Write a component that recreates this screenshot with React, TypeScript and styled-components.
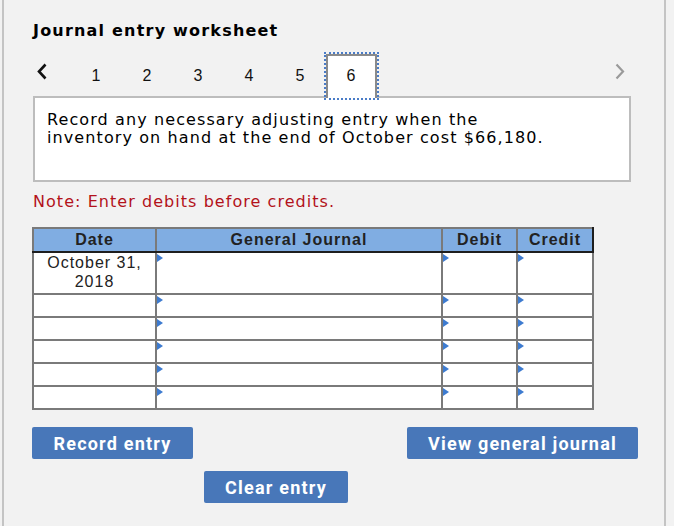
import React from 'react'
import styled, { createGlobalStyle } from 'styled-components'

const GlobalStyle = createGlobalStyle`
  html, body {
    margin: 0;
    padding: 0;
    background: #f2f2f2;
  }
`

const Frame = styled.div`
  box-sizing: border-box;
  width: 664px;
  height: 526px;
  margin-left: 2px;
  border-left: 2px solid #c4c4c4;
  border-right: 2px solid #c4c4c4;
  padding: 21px 0 0 28px;
  background: #f2f2f2;
`

const Title = styled.h2`
  margin: 0 0 0 1px;
  font-family: 'DejaVu Sans', Verdana, sans-serif;
  font-weight: bold;
  font-size: 16px;
  line-height: 20px;
  letter-spacing: 1.2px;
  color: #000;
`

const TabBar = styled.div`
  display: flex;
  align-items: flex-end;
  width: 600px;
  height: 42px;
  margin-top: 13px;
`

const Arrow = styled.button<{ $muted?: boolean }>`
  display: flex;
  align-items: flex-start;
  height: 42px;
  padding: 9px 0 0;
  border: 0;
  background: none;
  color: ${(p) => (p.$muted ? '#9a9a9a' : '#111')};
`

const PrevArrow = styled(Arrow)`
  width: 39px;
  padding-left: 5px;
`

const NextArrow = styled(Arrow)`
  margin-left: auto;
  padding-right: 7px;
`

const Tab = styled.div<{ $active?: boolean }>`
  box-sizing: border-box;
  width: 51px;
  height: 42px;
  display: flex;
  justify-content: center;
  padding-top: 13px;
  font-family: 'Liberation Sans', Arial, sans-serif;
  font-size: 16px;
  line-height: 18px;
  letter-spacing: 1px;
  color: #111;
  ${(p) =>
    p.$active &&
    `
    position: relative;
    z-index: 1;
    margin-bottom: -2px;
    height: 44px;
    background: #fff;
    border: 2px solid #8a8a8a;
    border-bottom: 0;
    outline: 2px dotted #4a7cc7;
    outline-offset: 0px;
    padding-top: 11px;
  `}
`

const Prompt = styled.div`
  box-sizing: border-box;
  width: 598px;
  height: 86px;
  margin-left: 1px;
  padding: 13px 12px 0;
  background: #fff;
  border: 2px solid #bdbdbd;
  font-family: 'DejaVu Sans', Verdana, sans-serif;
  font-size: 16px;
  line-height: 18px;
  letter-spacing: 1.1px;
  color: #000;
`

const Note = styled.p`
  margin: 10px 0 0 1px;
  font-family: 'DejaVu Sans', Verdana, sans-serif;
  font-size: 16px;
  line-height: 20px;
  letter-spacing: 1.05px;
  color: #b3121b;
`

const Grid = styled.table`
  margin-top: 15px;
  border-collapse: collapse;
  table-layout: fixed;
  width: 560px;
  font-family: 'Liberation Sans', Arial, sans-serif;
  font-size: 16px;
  letter-spacing: 1px;
  color: #222;
`

const Head = styled.th<{ $last?: boolean }>`
  height: 22px;
  padding: 0;
  background: #80ade2;
  font-weight: bold;
  text-align: center;
  border: 2px solid #7a7a7a;
  border-bottom-color: #1e1e1e;
  ${(p) => p.$last && 'border-right-color: #1e1e1e;'}
`

const Cell = styled.td<{ $tall?: boolean; $marker?: boolean }>`
  position: relative;
  height: ${(p) => (p.$tall ? '40px' : '21px')};
  padding: 0;
  background: #fff;
  border: 2px solid #7a7a7a;
  text-align: center;
  vertical-align: top;
  line-height: 19px;
  ${(p) =>
    p.$marker &&
    `
    &::before {
      content: '';
      position: absolute;
      left: 0;
      top: 1px;
      border-top: 4px solid transparent;
      border-bottom: 4px solid transparent;
      border-left: 6px solid #3d7bd0;
    }
  `}
`

const ButtonRow = styled.div`
  display: flex;
  justify-content: space-between;
  width: 606px;
  margin-top: 17px;
`

const ActionButton = styled.button<{ $w: number }>`
  box-sizing: border-box;
  width: ${(p) => p.$w}px;
  height: 32px;
  border: 0;
  border-radius: 2px;
  background: #4877b9;
  color: #fff;
  font-family: Roboto, 'Liberation Sans', sans-serif;
  font-weight: 700;
  font-size: 18px;
  letter-spacing: 1.2px;
  padding: 0;
`

const ClearRow = styled.div`
  margin: 12px 0 0 172px;
`

const Chevron = ({ dir }: { dir: 'left' | 'right' }) => (
  <svg width="10" height="17" viewBox="0 0 10 17">
    <path
      d={dir === 'left' ? 'M8.5 1.5 L2 8.5 L8.5 15.5' : 'M1.5 1.5 L8 8.5 L1.5 15.5'}
      fill="none"
      stroke="currentColor"
      strokeWidth={dir === 'left' ? 2.6 : 2.2}
    />
  </svg>
)

const rows = [0, 1, 2, 3, 4, 5]

export default function App() {
  return (
    <>
      <GlobalStyle />
      <Frame>
        <Title>Journal entry worksheet</Title>
        <TabBar>
          <PrevArrow>
            <Chevron dir="left" />
          </PrevArrow>
          {[1, 2, 3, 4, 5, 6].map((n) => (
            <Tab key={n} $active={n === 6}>
              {n}
            </Tab>
          ))}
          <NextArrow $muted>
            <Chevron dir="right" />
          </NextArrow>
        </TabBar>
        <Prompt>
          Record any necessary adjusting entry when the
          <br />
          inventory on hand at the end of October cost $66,180.
        </Prompt>
        <Note>Note: Enter debits before credits.</Note>
        <Grid>
          <colgroup>
            <col style={{ width: 123 }} />
            <col style={{ width: 286 }} />
            <col style={{ width: 75 }} />
            <col style={{ width: 76 }} />
          </colgroup>
          <thead>
            <tr>
              <Head>Date</Head>
              <Head>General Journal</Head>
              <Head>Debit</Head>
              <Head $last>Credit</Head>
            </tr>
          </thead>
          <tbody>
            {rows.map((r) => (
              <tr key={r}>
                <Cell $tall={r === 0}>
                  {r === 0 && (
                    <>
                      October 31,
                      <br />
                      2018
                    </>
                  )}
                </Cell>
                <Cell $tall={r === 0} $marker />
                <Cell $tall={r === 0} $marker />
                <Cell $tall={r === 0} $marker />
              </tr>
            ))}
          </tbody>
        </Grid>
        <ButtonRow>
          <ActionButton $w={161}>Record entry</ActionButton>
          <ActionButton $w={231}>View general journal</ActionButton>
        </ButtonRow>
        <ClearRow>
          <ActionButton $w={144}>Clear entry</ActionButton>
        </ClearRow>
      </Frame>
    </>
  )
}
